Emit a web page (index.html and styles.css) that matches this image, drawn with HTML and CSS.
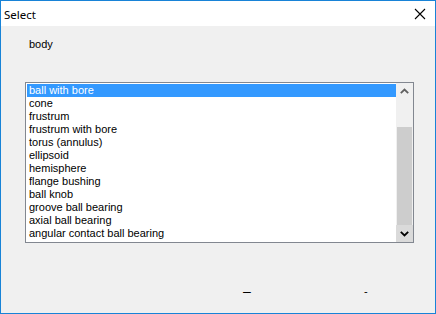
FILE: index.html
```html
<!DOCTYPE html>
<html>
<head>
<meta charset="utf-8">
<link rel="stylesheet" href="styles.css">
</head>
<body>
<div class="window">
  <div class="titlebar">
    <span class="title">Select</span>
    <svg class="close" width="12" height="12" viewBox="0 0 12 12"><path d="M1 1 L11 11 M11 1 L1 11" stroke="#000" stroke-width="1.1" fill="none"/></svg>
  </div>
  <div class="content">
    <div class="label">body</div>
    <div class="listbox">
      <ul class="items">
        <li class="selected">ball with bore</li>
        <li>cone</li>
        <li>frustrum</li>
        <li>frustrum with bore</li>
        <li>torus (annulus)</li>
        <li>ellipsoid</li>
        <li>hemisphere</li>
        <li>flange bushing</li>
        <li>ball knob</li>
        <li>groove ball bearing</li>
        <li>axial ball bearing</li>
        <li>angular contact ball bearing</li>
      </ul>
      <div class="scrollbar">
        <div class="sbtn up"><svg width="17" height="17" viewBox="0 0 17 17"><path d="M4.8 10.2 L8.5 6.5 L12.2 10.2" stroke="#606060" stroke-width="1.8" fill="none"/></svg></div>
        <div class="track"><div class="thumb"></div></div>
        <div class="sbtn down"><svg width="17" height="17" viewBox="0 0 17 17"><path d="M4.8 6.8 L8.5 10.5 L12.2 6.8" stroke="#000" stroke-width="1.8" fill="none"/></svg></div>
      </div>
    </div>
    <div class="footer"><span class="dash">–</span><span class="hyph">-</span></div>
  </div>
</div>
</body>
</html>
```
FILE: styles.css
```css
html, body {
  margin: 0;
  padding: 0;
}
body {
  font-family: "Liberation Sans", Arial, sans-serif;
  font-size: 11px;
  color: #000;
}
.window {
  width: 436px;
  height: 314px;
  box-sizing: border-box;
  border: 1px solid #1883d7;
  background: #f0f0f0;
  display: flex;
  flex-direction: column;
}
.titlebar {
  height: 25px;
  flex: none;
  background: #fff;
  display: flex;
  align-items: center;
  justify-content: space-between;
  padding: 0 9px 0 3px;
}
.title {
  font-family: "Noto Sans", "Open Sans", sans-serif;
  font-size: 11.5px;
  margin-top: 1px;
}
.close {
  display: block;
  margin-top: 0px;
}
.content {
  flex: 1;
  display: flex;
  flex-direction: column;
}
.label {
  line-height: 13px;
  padding: 12px 0 0 28px;
}
.listbox {
  margin: 31px 0 0 24px;
  width: 389px;
  height: 161px;
  box-sizing: border-box;
  border: 1px solid #828790;
  background: #fff;
  display: flex;
}
.items {
  list-style: none;
  margin: 0;
  padding: 1px 0 0 1px;
  flex: 1;
  overflow: hidden;
}
.items li {
  height: 13px;
  line-height: 13px;
  padding-left: 2px;
  white-space: nowrap;
}
.items li.selected {
  background: #3399ff;
  color: #fff;
}
.scrollbar {
  width: 17px;
  flex: none;
  display: flex;
  flex-direction: column;
  background: #f0f0f0;
}
.sbtn {
  height: 17px;
  flex: none;
}
.sbtn svg {
  display: block;
}
.sbtn.down {
  background: #dadada;
}
.track {
  flex: 1;
  display: flex;
  flex-direction: column;
  justify-content: flex-end;
}
.thumb {
  height: 98px;
  margin: 0 1px;
  background: #cdcdcd;
}
.footer {
  margin-top: 42px;
  line-height: 13px;
  display: flex;
  padding-left: 242px;
}
.dash {
  width: 121px;
  font-size: 14px;
}
.hyph {
  font-size: 11px;
}
```
